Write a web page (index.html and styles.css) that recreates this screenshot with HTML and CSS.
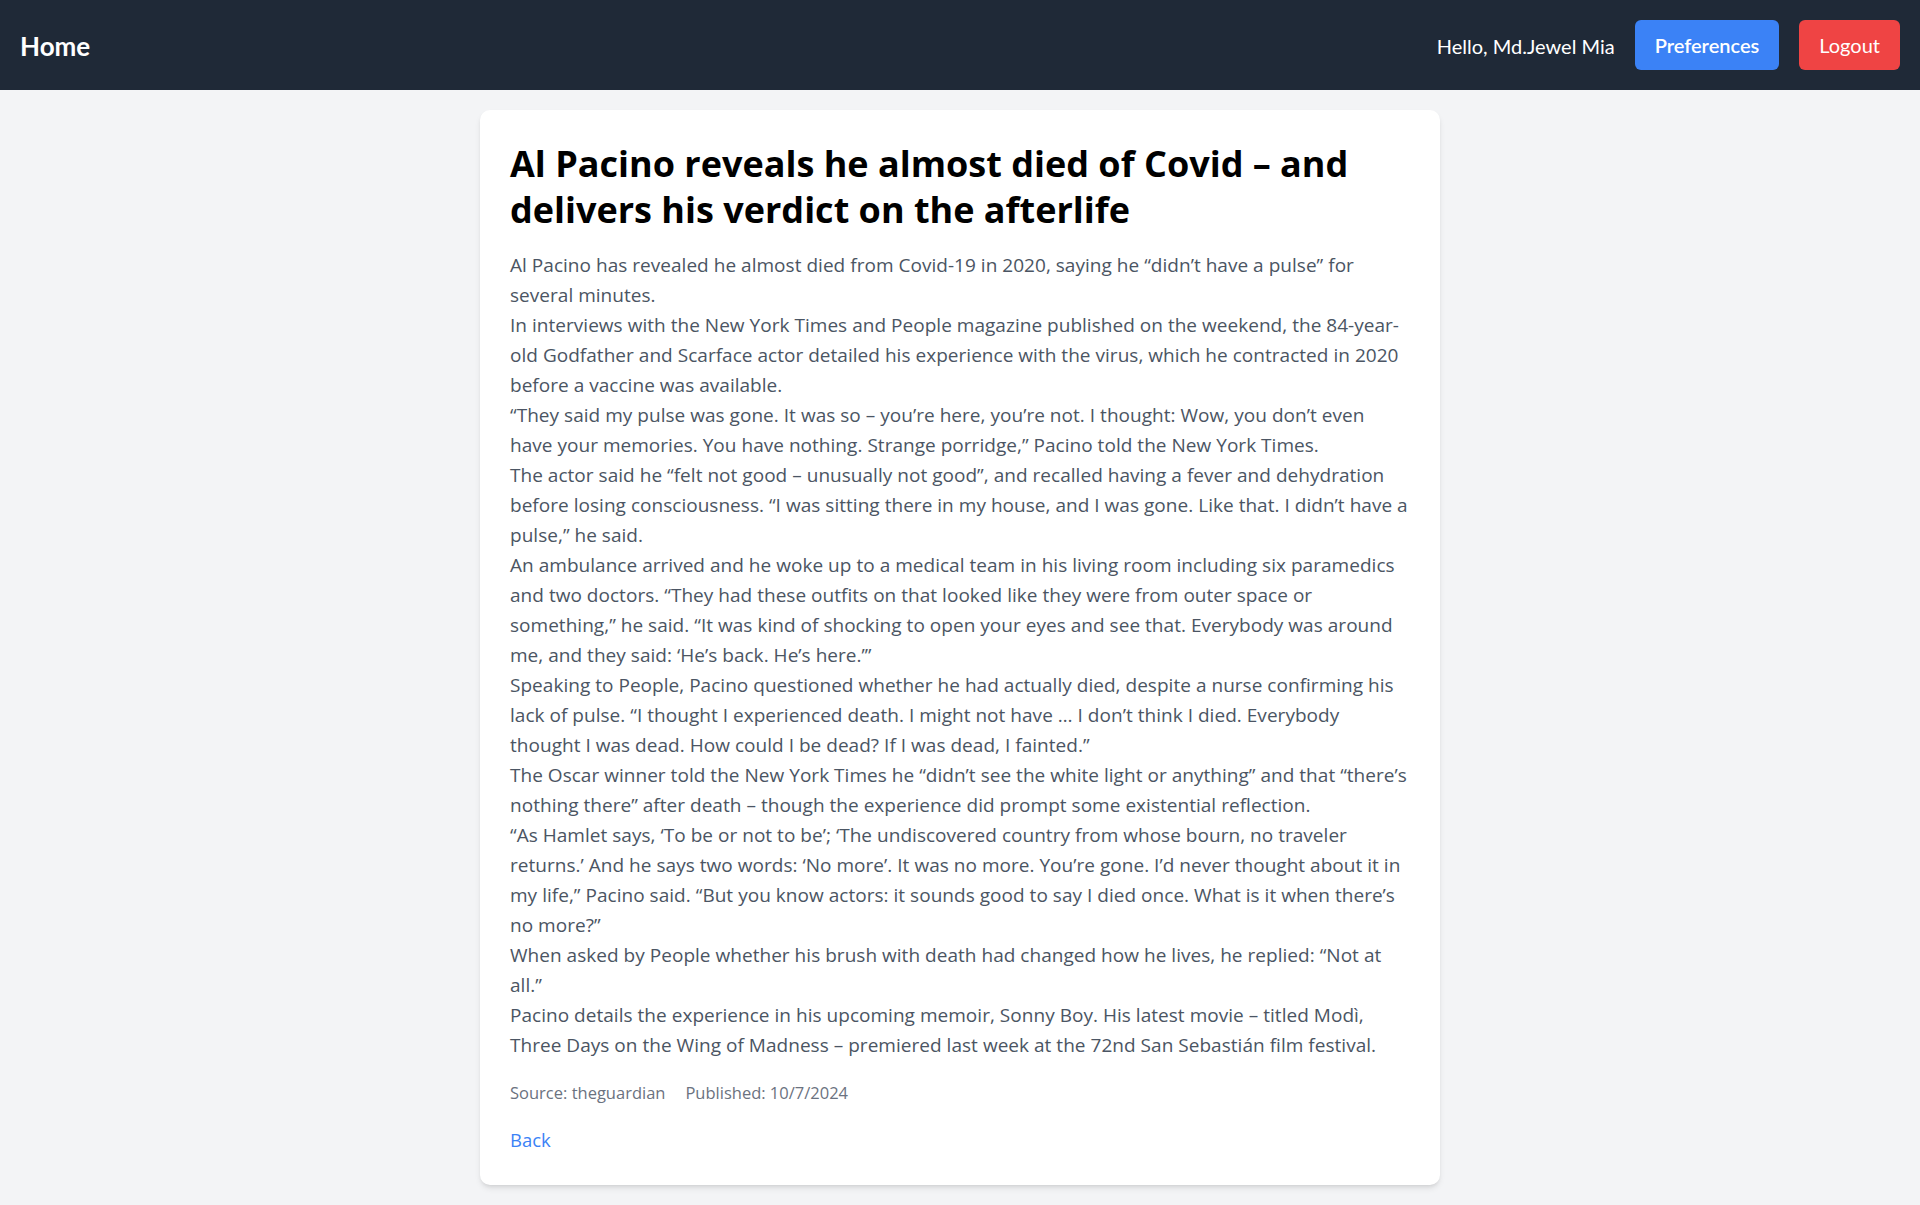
FILE: index.html
```html
<!DOCTYPE html>
<html lang="en">
<head>
<meta charset="utf-8">
<title>Home</title>
<link rel="stylesheet" href="styles.css">
</head>
<body>
<nav class="navbar">
  <a class="brand" href="#">Home</a>
  <div class="nav-right">
    <span class="greeting">Hello, Md.Jewel Mia</span>
    <button class="btn btn-blue">Preferences</button>
    <button class="btn btn-red">Logout</button>
  </div>
</nav>
<main class="page">
  <article class="card">
    <h1 class="title">Al Pacino reveals he almost died of Covid – and delivers his verdict on the afterlife</h1>
    <div class="content">
      <p>Al Pacino has revealed he almost died from Covid-19 in 2020, saying he “didn’t have a pulse” for several minutes.</p>
      <p>In interviews with the New York Times and People magazine published on the weekend, the 84-year-old Godfather and Scarface actor detailed his experience with the virus, which he contracted in 2020 before a vaccine was available.</p>
      <p>“They said my pulse was gone. It was so – you’re here, you’re not. I thought: Wow, you don’t even have your memories. You have nothing. Strange porridge,” Pacino told the New York Times.</p>
      <p>The actor said he “felt not good – unusually not good”, and recalled having a fever and dehydration before losing consciousness. “I was sitting there in my house, and I was gone. Like that. I didn’t have a pulse,” he said.</p>
      <p>An ambulance arrived and he woke up to a medical team in his living room including six paramedics and two doctors. “They had these outfits on that looked like they were from outer space or something,” he said. “It was kind of shocking to open your eyes and see that. Everybody was around me, and they said: ‘He’s back. He’s here.’”</p>
      <p>Speaking to People, Pacino questioned whether he had actually died, despite a nurse confirming his lack of pulse. “I thought I experienced death. I might not have … I don’t think I died. Everybody thought I was dead. How could I be dead? If I was dead, I fainted.”</p>
      <p>The Oscar winner told the New York Times he “didn’t see the white light or anything” and that “there’s nothing there” after death – though the experience did prompt some existential reflection.</p>
      <p>“As Hamlet says, ‘To be or not to be’; ‘The undiscovered country from whose bourn, no traveler returns.’ And he says two words: ‘No more’. It was no more. You’re gone. I’d never thought about it in my life,” Pacino said. “But you know actors: it sounds good to say I died once. What is it when there’s no more?”</p>
      <p>When asked by People whether his brush with death had changed how he lives, he replied: “Not at all.”</p>
      <p>Pacino details the experience in his upcoming memoir, Sonny Boy. His latest movie – titled Modì, Three Days on the Wing of Madness – premiered last week at the 72nd San Sebastián film festival.</p>
    </div>
    <div class="meta">
      <span>Source: theguardian</span>
      <span>Published: 10/7/2024</span>
    </div>
    <a class="back" href="#">Back</a>
  </article>
</main>
</body>
</html>
```

FILE: styles.css
```css
* { box-sizing: border-box; }
html, body { margin: 0; padding: 0; }
body {
  background: #f3f4f6;
  font-family: "Open Sans", "Noto Sans", sans-serif;
  color: #4b5563;
}
.navbar {
  height: 90px;
  background: #1f2937;
  display: flex;
  align-items: center;
  justify-content: space-between;
  padding: 0 20px;
  font-family: "Lato", "Open Sans", sans-serif;
}
.brand {
  color: #ffffff;
  font-size: 26px;
  font-weight: 700;
  text-decoration: none;
  padding-top: 2px;
}
.nav-right {
  display: flex;
  align-items: center;
  gap: 20px;
}
.greeting {
  color: #ffffff;
  font-size: 20px;
  padding-top: 1px;
}
.btn {
  height: 50px;
  border: none;
  border-radius: 6px;
  padding: 0 20px;
  color: #ffffff;
  font-family: inherit;
  font-size: 20px;
  cursor: pointer;
}
.btn-blue { background: #3b82f6; font-weight: 600; }
.btn-red { background: #ef4444; font-weight: 400; }
.page {
  padding: 20px 0;
  display: flex;
  justify-content: center;
}
.card {
  width: 960px;
  background: #ffffff;
  border-radius: 10px;
  box-shadow: 0 4px 6px -1px rgba(0,0,0,0.1), 0 2px 4px -2px rgba(0,0,0,0.1);
  padding: 31px 30px 30px;
}
.title {
  margin: 0 0 17px;
  font-size: 36px;
  line-height: 46px;
  font-weight: 700;
  color: #000000;
}
.content p {
  margin: 0;
  font-size: 19px;
  line-height: 30px;
  letter-spacing: 0.03px;
}
.meta {
  margin-top: 21px;
  display: flex;
  gap: 20px;
  font-size: 16.5px;
  line-height: 24px;
  color: #6b7280;
}
.back {
  display: inline-block;
  margin-top: 20px;
  font-size: 18.5px;
  line-height: 30px;
  color: #3b82f6;
  text-decoration: none;
}
```
